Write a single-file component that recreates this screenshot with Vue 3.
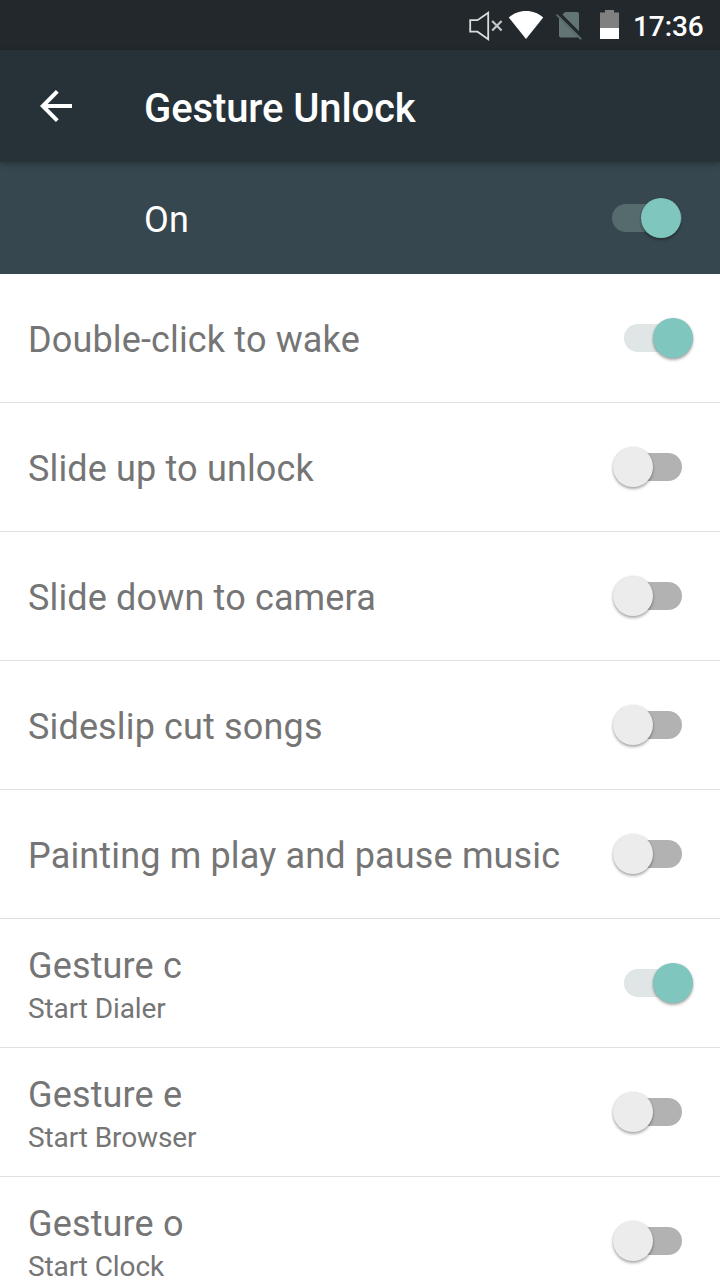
<script setup>
import { ref } from "vue"

const enabled = ref(true)

const gestures = ref([
    { title: "Double-click to wake", on: true },
    { title: "Slide up to unlock", on: false },
    { title: "Slide down to camera", on: false },
    { title: "Sideslip cut songs", on: false },
    { title: "Painting m play and pause music", on: false },
    { title: "Gesture c", summary: "Start Dialer", on: true },
    { title: "Gesture e", summary: "Start Browser", on: false },
    { title: "Gesture o", summary: "Start Clock", on: false }
])
</script>

<template>
    <div class="screen">
        <header class="status">
            <svg class="mute" width="36" height="32" viewBox="0 0 36 32">
                <path d="M2.2 10.2H9.5L20.2 2.7V29.2L9.5 21.7H2.2Z" fill="none" stroke="#d8dcdc" stroke-width="1.8" />
                <path d="M24.2 11L33.6 20.6M33.6 11L24.2 20.6" stroke="#c3c8ca" stroke-width="2.2" />
            </svg>
            <svg class="wifi" width="36" height="30" viewBox="0 0 36 30">
                <path d="M18 29L.8 7.4C5.6 3.4 11.2 1 18 1S30.4 3.4 35.2 7.4Z" fill="#fff" />
            </svg>
            <svg class="sim" width="28" height="30" viewBox="0 0 28 30">
                <path d="M10 2H22Q24 2 24 4V25.5Q24 27.5 22 27.5H6Q4 27.5 4 25.5V8Z" fill="#627473" />
                <path d="M3.5 3L27.5 27" stroke="#22282c" stroke-width="3.2" />
                <path d="M1.6 4.6L26.2 29.2" stroke="#566a6d" stroke-width="2" />
            </svg>
            <svg class="battery" width="19" height="29" viewBox="0 0 19 29">
                <path d="M5 0H14V2.6H19V18H0V2.6H5Z" fill="#808080" />
                <path d="M0 18H19V29H0Z" fill="#fff" />
            </svg>
            <span class="time">17:36</span>
        </header>

        <div class="toolbar">
            <svg class="back" width="32" height="32" viewBox="0 0 32 32">
                <path d="M17.3 1.4L2.8 16L17.3 30.6M2.8 16H32" fill="none" stroke="#fff" stroke-width="4" />
            </svg>
            <h1>Gesture Unlock</h1>
        </div>

        <div class="master" @click="enabled = !enabled">
            <span>On</span>
            <i class="switch dark" :class="{ on: enabled }"></i>
        </div>

        <ul class="list">
            <li v-for="item in gestures" :key="item.title" @click="item.on = !item.on">
                <div class="text">
                    <div class="title">{{ item.title }}</div>
                    <div v-if="item.summary" class="summary">{{ item.summary }}</div>
                </div>
                <i class="switch" :class="{ on: item.on }"></i>
            </li>
        </ul>
    </div>
</template>

<style>
body {
    margin: 0;
    background: #fff;
}
</style>

<style scoped>
.screen {
    width: 720px;
    height: 1280px;
    overflow: hidden;
    background: #fff;
    font-family: Roboto, "Liberation Sans", sans-serif;
    color: #757575;
}

.status {
    display: flex;
    align-items: flex-start;
    justify-content: flex-end;
    box-sizing: border-box;
    height: 50px;
    padding: 10px 16px 0 0;
    background: #22282c;
    color: #fff;
}

.wifi {
    margin-left: 4px;
}

.sim {
    margin-left: 11px;
}

.battery {
    margin-left: 17px;
}

.time {
    width: 71px;
    margin-left: 14px;
    font-size: 28px;
    font-weight: 500;
    line-height: 33px;
    letter-spacing: -0.1px;
}

.toolbar {
    position: relative;
    display: flex;
    align-items: center;
    height: 112px;
    padding-left: 40px;
    background: #263238;
    box-shadow: 0 2px 6px rgba(0, 0, 0, 0.3);
    color: #fff;
}

h1 {
    margin: 6px 0 0 72px;
    font-size: 40px;
    font-weight: 500;
    line-height: 48px;
    letter-spacing: -0.1px;
}

.master {
    display: flex;
    align-items: center;
    justify-content: space-between;
    height: 112px;
    padding: 0 38px 0 144px;
    background: #37474f;
    color: #fff;
    font-size: 36px;
}

.master span {
    padding-top: 3px;
    letter-spacing: 0.15px;
}

.list {
    margin: 0;
    padding: 0;
    list-style: none;
}

li {
    display: flex;
    align-items: center;
    justify-content: space-between;
    box-sizing: border-box;
    height: 129px;
    padding: 0 38px 0 28px;
    border-bottom: 1px solid #e0e0e0;
}

.title {
    padding-top: 3px;
    font-size: 36px;
    line-height: 42px;
    letter-spacing: 0.15px;
}

.summary {
    padding-top: 4px;
    margin-bottom: -3px;
    font-size: 28px;
    line-height: 36px;
    letter-spacing: -0.1px;
}

.switch {
    position: relative;
    flex: none;
    width: 50px;
    height: 28px;
    border-radius: 14px;
    background: #b2b2b2;
}

.switch::after {
    content: "";
    position: absolute;
    top: -6px;
    left: -19px;
    width: 40px;
    height: 40px;
    border-radius: 50%;
    background: #ececec;
    box-shadow: 0 2px 3px rgba(0, 0, 0, 0.32), 0 0 2px rgba(0, 0, 0, 0.12);
}

.switch.on {
    width: 58px;
    background: #e0e5e5;
}

.switch.on::after {
    left: 29px;
    background: #7fc6bf;
}

.switch.dark.on {
    width: 70px;
    background: #566b6e;
}
</style>
